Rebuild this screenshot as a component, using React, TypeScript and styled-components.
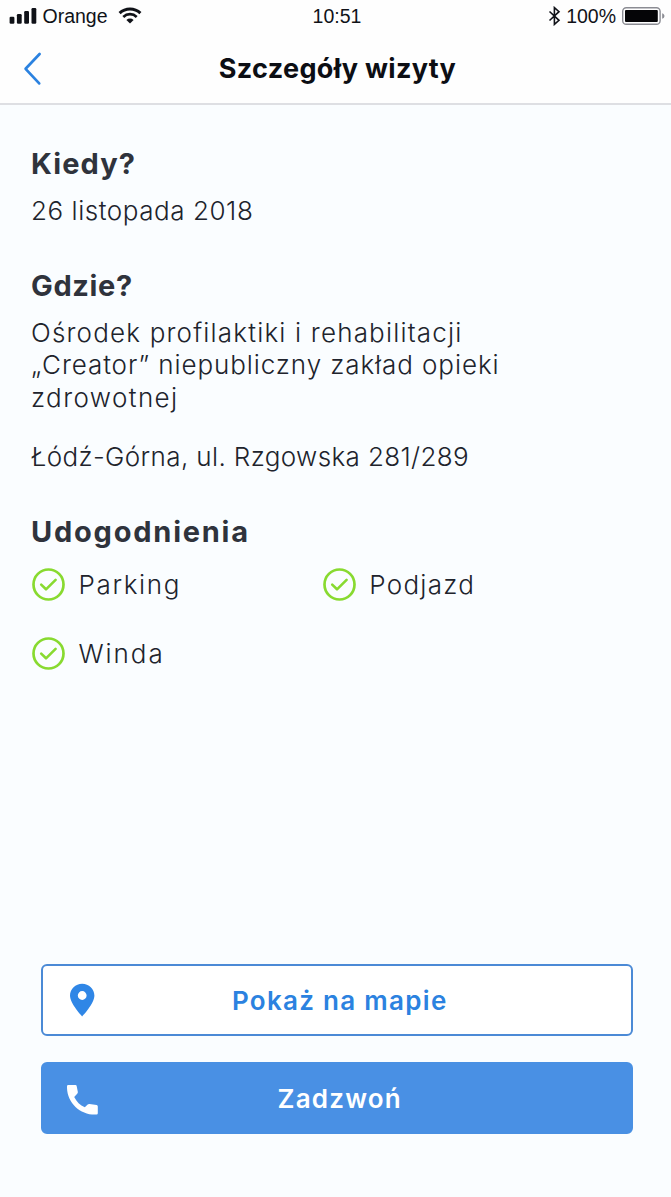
import React from 'react';
import styled, { createGlobalStyle } from 'styled-components';

const GlobalStyle = createGlobalStyle`
  *, *::before, *::after { box-sizing: border-box; }
  body { margin: 0; background: #fafdff; }
`;

const Screen = styled.div`
  display: flex;
  flex-direction: column;
  width: 671px;
  height: 1197px;
  background: #fafdff;
  color: #20232c;
  font-family: Inter, 'Open Sans', sans-serif;
  overflow: hidden;
`;

const Header = styled.header`
  height: 105px;
  background: #fefefe;
  border-bottom: 2px solid #dedfe3;
`;

const StatusBar = styled.div`
  display: grid;
  grid-template-columns: 1fr auto 1fr;
  height: 32px;
  padding: 0 6px 0 9px;
  color: #101218;
  font: 19.5px/33px 'Liberation Sans', Arial, sans-serif;
`;

const StatusGroup = styled.div<{ $end?: boolean }>`
  display: flex;
  align-items: center;
  justify-content: ${(p) => (p.$end ? 'flex-end' : 'flex-start')};
`;

const SignalIcon = styled.svg`
  width: 28px;
  height: 16px;
  margin: -1px 5.5px 0 0;
`;

const WifiIcon = styled.svg`
  width: 24px;
  height: 17px;
  margin: -2px 0 0 10px;
`;

const BluetoothIcon = styled.svg`
  width: 13px;
  height: 20px;
  margin-right: 5px;
  margin-top: -1px;
`;

const BatteryIcon = styled.svg`
  width: 43px;
  height: 18px;
  margin-left: 6px;
  margin-top: -1px;
`;

const NavBar = styled.div`
  display: grid;
  grid-template-columns: 60px 1fr 60px;
  align-items: center;
  height: 71px;
`;

const BackButton = styled.button`
  display: flex;
  padding: 3px 0 0 22px;
  border: 0;
  background: none;
`;

const Title = styled.h1`
  margin: 0;
  padding: 2px 0 0 4px;
  color: #0c0e14;
  font-size: 27px;
  font-weight: 700;
  line-height: 36px;
  letter-spacing: 0.34px;
  text-align: center;
`;

const Content = styled.main`
  flex: 1;
  padding: 40.5px 31px 0;
`;

const Section = styled.section`
  & + & { margin-top: 40.8px; }
`;

const Heading = styled.h2<{ $track: number }>`
  margin: 0 0 13px;
  color: #2f333c;
  font-size: 29px;
  font-weight: 700;
  line-height: 36px;
  letter-spacing: ${(p) => p.$track}px;
`;

const Paragraph = styled.p`
  margin: 0;
  font-size: 26px;
  font-weight: 300;
  line-height: 32.5px;
  white-space: nowrap;
  & + & { margin-top: 26.7px; }
`;

const Line = styled.span<{ $track: number }>`
  display: block;
  letter-spacing: ${(p) => p.$track}px;
`;

const Amenities = styled.ul`
  display: grid;
  grid-template-columns: 290.8px 1fr;
  row-gap: 35.8px;
  margin: 0;
  padding: 5.2px 0 0 1px;
  list-style: none;
`;

const Amenity = styled.li<{ $track: number }>`
  display: flex;
  align-items: center;
  gap: 13.5px;
  height: 32.5px;
  font-size: 26px;
  font-weight: 300;
  line-height: 32.5px;
  letter-spacing: ${(p) => p.$track}px;
`;

const AmenityName = styled.span`
  padding-top: 2px;
`;

const Actions = styled.footer`
  display: flex;
  flex-direction: column;
  gap: 26px;
  padding: 0 38px 63px 41px;
`;

const ActionButton = styled.button<{ $filled?: boolean }>`
  display: grid;
  grid-template-columns: 30px 1fr 30px;
  align-items: center;
  height: 72px;
  padding: 0 24px;
  border: 2px solid ${(p) => (p.$filled ? '#4990e3' : '#4b8ad6')};
  border-radius: 6px;
  background: ${(p) => (p.$filled ? '#4990e4' : '#ffffff')};
  color: ${(p) => (p.$filled ? '#ffffff' : '#2b82e0')};
  font-family: inherit;
`;

const ActionLabel = styled.span<{ $track: number }>`
  padding: 2px 0 0 5.5px;
  font-size: 26px;
  font-weight: 600;
  line-height: 32px;
  letter-spacing: ${(p) => p.$track}px;
`;

const Check = () => (
  <svg width="33" height="33" viewBox="0 0 33 33" fill="none" stroke="#88da30" strokeLinecap="round" strokeLinejoin="round">
    <circle cx="16.5" cy="16.5" r="15" strokeWidth="2.7" />
    <path d="M9.2 16.6 14 21.3 23.6 11.8" strokeWidth="2.6" />
  </svg>
);

const amenities = [
  { name: 'Parking', track: 1.65 },
  { name: 'Podjazd', track: 1.25 },
  { name: 'Winda', track: 1.95 },
];

export default function App() {
  return (
    <Screen>
      <GlobalStyle />
      <Header>
        <StatusBar>
          <StatusGroup>
            <SignalIcon viewBox="0 0 28 16" fill="#101218">
              <rect x="0.6" y="8.8" width="4.8" height="7" rx="1.2" />
              <rect x="7.9" y="6.1" width="4.8" height="9.7" rx="1.2" />
              <rect x="15.2" y="3.1" width="4.8" height="12.7" rx="1.2" />
              <rect x="22.5" y="0.1" width="4.8" height="15.7" rx="1.2" />
            </SignalIcon>
            Orange
            <WifiIcon viewBox="0 0 24 17" fill="none" stroke="#101218">
              <path d="M1.6 6.1a15 15 0 0 1 20.8 0" strokeWidth="3" />
              <path d="M5.3 9.9a9.7 9.7 0 0 1 13.4 0" strokeWidth="2.7" />
              <path d="M8.4 13a5.3 5.3 0 0 1 7.2 0L12 16.5z" fill="#101218" stroke="none" />
            </WifiIcon>
          </StatusGroup>
          <span>10:51</span>
          <StatusGroup $end>
            <BluetoothIcon viewBox="0 0 13 20" fill="none" stroke="#101218" strokeWidth="1.6">
              <path d="M1.5 5.5 11 14.3 6.4 18.4V1.6L11 5.7 1.5 14.5" />
            </BluetoothIcon>
            100%
            <BatteryIcon viewBox="0 0 43 18">
              <rect x="0.7" y="0.7" width="37.4" height="16.6" rx="3.6" fill="none" stroke="#8b8c93" strokeWidth="1.4" />
              <rect x="3" y="3" width="32.8" height="12" rx="1" fill="#050507" />
              <path d="M40.2 6.2c3 .9 3 4.7 0 5.6z" fill="#8b8c93" />
            </BatteryIcon>
          </StatusGroup>
        </StatusBar>
        <NavBar>
          <BackButton aria-label="Wstecz">
            <svg width="22" height="34" viewBox="0 0 22 34" fill="none" stroke="#2b82e0" strokeWidth="2.7" strokeLinecap="round" strokeLinejoin="round">
              <path d="M17.6 2 3.6 16.8 17.2 31.4" />
            </svg>
          </BackButton>
          <Title>Szczegóły wizyty</Title>
        </NavBar>
      </Header>

      <Content>
        <Section>
          <Heading $track={1.1}>Kiedy?</Heading>
          <Paragraph><Line $track={0.55}>26 listopada 2018</Line></Paragraph>
        </Section>
        <Section>
          <Heading $track={0.65}>Gdzie?</Heading>
          <Paragraph>
            <Line $track={1.18}>Ośrodek profilaktiki i rehabilitacji</Line>
            <Line $track={0.91}>„Creator” niepubliczny zakład opieki</Line>
            <Line $track={1.4}>zdrowotnej</Line>
          </Paragraph>
          <Paragraph><Line $track={0.37}>Łódź-Górna, ul. Rzgowska 281/289</Line></Paragraph>
        </Section>
        <Section>
          <Heading $track={1.77}>Udogodnienia</Heading>
          <Amenities>
            {amenities.map((a) => (
              <Amenity key={a.name} $track={a.track}>
                <Check />
                <AmenityName>{a.name}</AmenityName>
              </Amenity>
            ))}
          </Amenities>
        </Section>
      </Content>

      <Actions>
        <ActionButton>
          <svg width="32" height="34" viewBox="0 0 32 34" fill="#2f86e6">
            <path fillRule="evenodd" d="M15.2.8C8.5.8 3 6 3 12.6 3 20.8 15.2 33.4 15.2 33.4S27.4 20.8 27.4 12.6C27.4 6 21.9.8 15.2.8zm0 7.3a4.4 4.4 0 1 1 0 8.800 4.400 4.400 0 0 1 0-8.800z" />
          </svg>
          <ActionLabel $track={1.3}>Pokaż na mapie</ActionLabel>
        </ActionButton>
        <ActionButton $filled>
          <svg width="32" height="34" viewBox="0 0 32 34" fill="#ffffff">
            <path d="M1.2 4H8.4Q9.6 4 9.7 5.2L10.8 10.8Q11 12 10.2 12.7L7.2 15.9C9.6 20.6 13 24.1 17.8 26.3L20.7 23.6Q21.4 22.9 22.5 23.1L29.6 24.1Q30.8 24.3 30.8 25.5V32.2Q30.8 33.4 29.6 33.5C13.5 34.5-.5 21.5 0 5.2Q0 4 1.2 4z" />
          </svg>
          <ActionLabel $track={1.2}>Zadzwoń</ActionLabel>
        </ActionButton>
      </Actions>
    </Screen>
  );
}
